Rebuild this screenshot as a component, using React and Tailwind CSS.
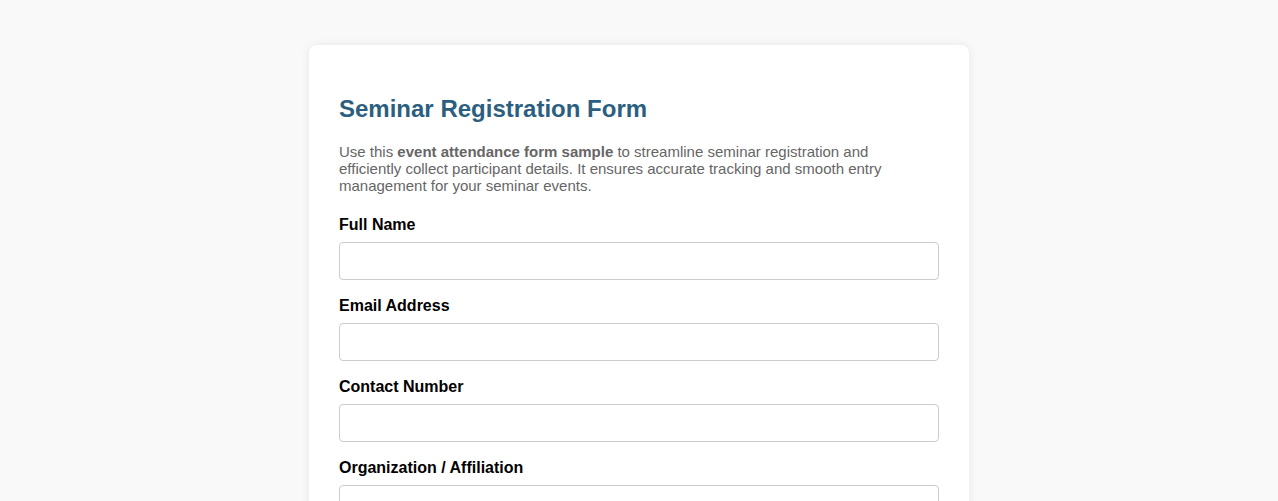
export default function App() {
  const fields = ["Full Name", "Email Address", "Contact Number", "Organization / Affiliation", "Seminar Topic", "Preferred Session"];
  return (
    <div className="min-h-screen bg-[#f9f9f9] pt-[45px] pb-10" style={{ fontFamily: '"Liberation Sans", Arial, sans-serif' }}>
      <div className="mx-auto w-[660px] bg-white rounded-lg shadow-[0_0_10px_rgba(0,0,0,0.08)] p-[30px]">
        <h2 className="mt-5 mb-5 text-[24px] leading-[28px] font-bold text-[#2c5f7f]">Seminar Registration Form</h2>
        <p className="mb-[22px] max-w-[558px] text-[15px] leading-[17px] text-[#666]">
          Use this <strong className="font-bold">event attendance form sample</strong> to streamline seminar registration and efficiently collect participant details. It ensures accurate tracking and smooth entry management for your seminar events.
        </p>
        {fields.map((f) => (
          <div key={f} className="mb-[17px]">
            <label className="block mb-2 text-[16px] leading-[18px] font-bold text-black">{f}</label>
            <input type="text" className="block w-full h-[38px] border border-[#ccc] rounded px-2 text-[16px]" />
          </div>
        ))}
      </div>
    </div>
  );
}
